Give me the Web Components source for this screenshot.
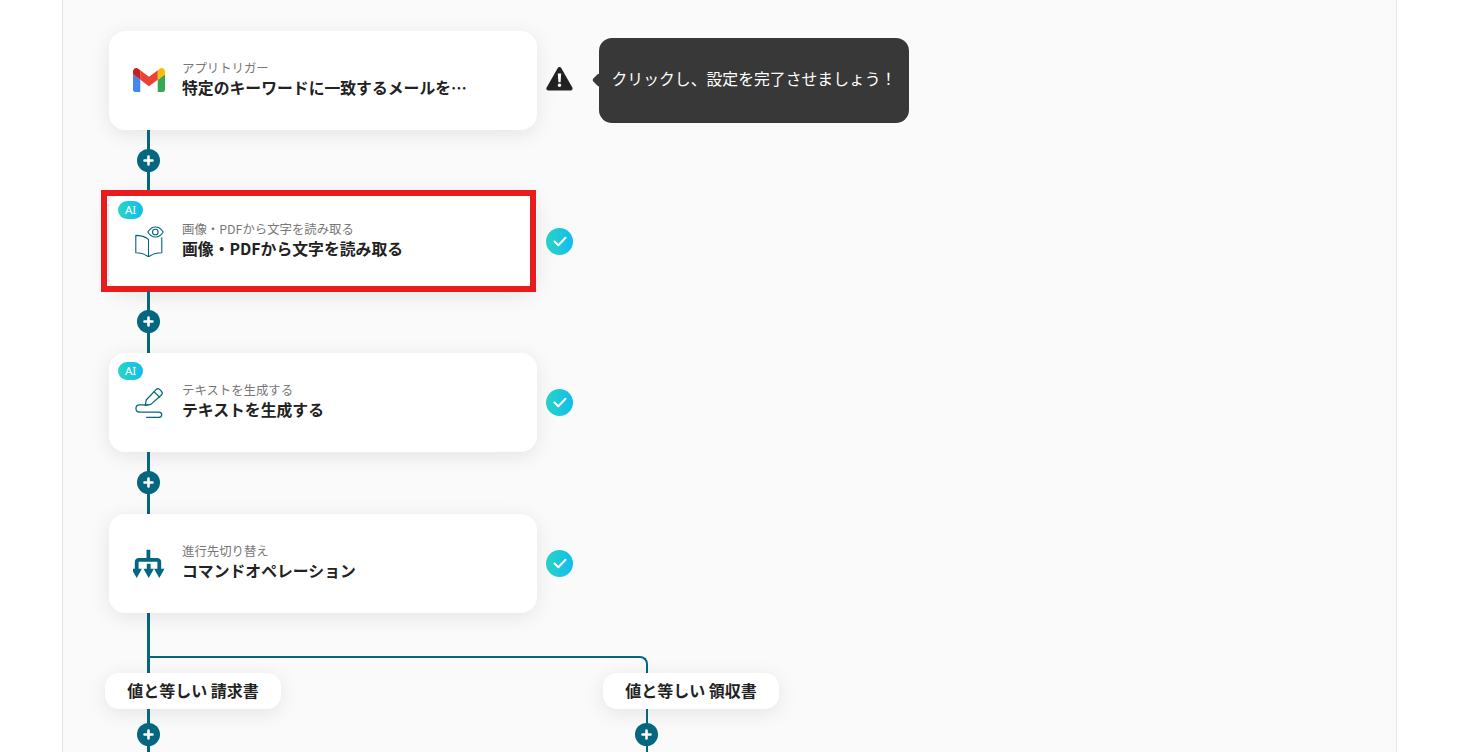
<!DOCTYPE html>
<html lang="ja">
<head>
<meta charset="utf-8">
<title>Flow</title>
<style>
  html, body { margin: 0; height: 100%; background: #fff; overflow: hidden; }
  body { font-family: "Noto Sans CJK JP", "Noto Sans", sans-serif; color: #222; }
</style>
</head>
<body>
<flow-canvas>
  <flow-step sub="アプリトリガー" heading="特定のキーワードに一致するメールを…" status="warn" tip="クリックし、設定を完了させましょう！">
    <svg slot="icon" width="32" height="24" viewBox="52 42 88 66">
      <path fill="#4285f4" d="M58 108h14V74L52 59v43c0 3.32 2.69 6 6 6"/>
      <path fill="#34a853" d="M120 108h14c3.32 0 6-2.69 6-6V59l-20 15"/>
      <path fill="#fbbc04" d="M120 48v26l20-15v-8c0-7.42-8.47-11.65-14.4-7.2"/>
      <path fill="#ea4335" d="M72 74V48l24 18 24-18v26L96 92"/>
      <path fill="#c5221f" d="M52 51v8l20 15V48l-5.6-4.2c-5.94-4.45-14.4-.22-14.4 7.2"/>
    </svg>
  </flow-step>
  <flow-connector></flow-connector>
  <flow-step sub="画像・PDFから文字を読み取る" heading="画像・PDFから文字を読み取る" status="ok" ai marked>
    <svg slot="icon" width="32" height="32" viewBox="0 0 32 32" fill="none" stroke="#05667f" stroke-width="1.1" stroke-linejoin="round" stroke-linecap="round">
      <path d="M15.5 14.4C12 11.5 8 10.4 2.8 10.4V27.75C8 27.75 12 28.8 15.5 32C19 28.8 23 27.75 28.8 27.75V12.75M15.5 14.4V32"/>
      <path d="M14.8 7C17 3.5 20 2 22.4 2S28 3.5 30.2 7C28 10.5 25 12 22.4 12S17 10.5 14.8 7Z"/>
      <circle cx="22.3" cy="7" r="2.8"/>
    </svg>
  </flow-step>
  <flow-connector></flow-connector>
  <flow-step sub="テキストを生成する" heading="テキストを生成する" status="ok" ai>
    <svg slot="icon" width="32" height="32" viewBox="0 0 32 32" fill="none" stroke="#05667f" stroke-width="1.25" stroke-linejoin="round" stroke-linecap="round">
      <path d="M12.3 19.5L13.2 14L23 3.6C24.2 2.4 25.6 2.4 26.8 3.6L28.4 5.2C29.6 6.4 29.6 7.8 28.4 9L17.8 18.4Z"/>
      <path d="M21 5.6L26.6 11.2"/>
      <path d="M15 18.9H6.7C1.7 18.9 1.7 26 6.7 26H25.7C29.7 26 29.7 31.4 25.7 31.4H13.7"/>
    </svg>
  </flow-step>
  <flow-connector></flow-connector>
  <flow-step sub="進行先切り替え" heading="コマンドオペレーション" status="ok">
    <svg slot="icon" width="32" height="32" viewBox="0 0 32 32" fill="#05667f">
      <path fill="none" stroke="#05667f" stroke-width="3.8" d="M15.4 2.75V12.8M3.7 24V15a2.2 2.2 0 0 1 2.2-2.2H24.1a2.2 2.2 0 0 1 2.2 2.2V24M15.7 16.8V24"/>
      <path d="M-1.5 21.8H8.9L3.7 31ZM10.5 21.8H20.9L15.7 31ZM21.1 21.8H31.5L26.3 31Z"/>
    </svg>
  </flow-step>
  <flow-branches>
    <branch-pill slot="left">値と等しい 請求書</branch-pill>
    <branch-pill slot="right">値と等しい 領収書</branch-pill>
  </flow-branches>
</flow-canvas>

<script>
const lineColor = "#05667f";

// flow-canvas — the bordered grey sheet everything sits on
class FlowCanvas extends HTMLElement {
  constructor() {
    super();
    this.attachShadow({ mode: "open" }).innerHTML = `
      <style>
        :host {
          display: block;
          box-sizing: border-box;
          width: 1335px;
          height: 752px;
          margin-left: 62px;
          padding: 31px 0 0 46px;
          background: #fafafa;
          border-left: 1px solid #e4e4e4;
          border-right: 1px solid #e4e4e4;
          overflow: hidden;
        }
      </style>
      <slot></slot>`;
  }
}
customElements.define("flow-canvas", FlowCanvas);

// flow-step — card + status mark. Attributes: sub, heading, status, tip, ai, marked
class FlowStep extends HTMLElement {
  constructor() {
    super();
    this.attachShadow({ mode: "open" });
  }
  connectedCallback() {
    const status = this.getAttribute("status");
    const tip = this.getAttribute("tip");
    const mark = status === "warn"
      ? `<svg class="mark warn" width="27" height="25" viewBox="0 0 27 25"><path fill="#222" stroke="#222" stroke-width="4" stroke-linejoin="round" d="M13.5 3L2.4 22.5H24.6Z"/><path fill="#fff" d="M11.8 7.5h3.4l-.6 8.8h-2.2zM13.5 17.5a1.8 1.8 0 1 1 0 3.6a1.8 1.8 0 0 1 0-3.6z"/></svg>`
      : `<span class="ok"><svg width="14" height="11" viewBox="0 0 14 11" fill="none" stroke="#fff" stroke-width="2" stroke-linecap="round" stroke-linejoin="round"><path d="M1.5 5.5L5.3 9.3L12.5 1.7"/></svg></span>`;
    this.shadowRoot.innerHTML = `
      <style>
        :host { display: flex; align-items: center; }
        .card {
          position: relative;
          box-sizing: border-box;
          flex: none;
          width: 428px;
          height: 98.5px;
          display: flex;
          align-items: center;
          gap: 17px;
          padding: 0 20px 0 24px;
          background: #fff;
          border-radius: 16px;
          box-shadow: 0 4px 20px rgba(0,0,0,.09);
        }
        .icon { flex: none; width: 32px; height: 32px; display: flex; align-items: center; justify-content: center; }
        .text { min-width: 0; margin-bottom: 1px; }
        .sub { font-size: 12.4px; line-height: 17px; color: #777; white-space: nowrap; }
        .title { font-size: 15.84px; font-weight: 700; line-height: 22px; color: #222; white-space: nowrap; }
        .ai {
          position: absolute; left: 9px; top: 9px;
          width: 25px; height: 18px; border-radius: 9px;
          background: linear-gradient(90deg, #2ad4c4, #10bdee);
          color: #fff; font: 400 11.5px/18px "Noto Sans", sans-serif; text-align: center;
        }
        .mark, .ok { flex: none; margin-left: 9px; }
        .warn { margin-bottom: 4px; }
        .ok {
          width: 27px; height: 27px; border-radius: 50%;
          display: flex; align-items: center; justify-content: center;
          background: linear-gradient(90deg, #2ad4c4, #10bdee);
        }
        .tip {
          position: relative;
          box-sizing: border-box;
          flex: none;
          width: 310px; height: 85px;
          margin-left: 26px;
          padding-bottom: 3px;
          display: flex; align-items: center; justify-content: center;
          background: #383838;
          border-radius: 13px;
          color: #fff; font-size: 15.84px; white-space: nowrap;
        }
        .tip::before {
          content: ""; position: absolute; left: -5px; top: 37px;
          width: 10px; height: 10px; background: #383838;
          transform: rotate(45deg); border-radius: 2px;
        }
        .marked {
          position: absolute; left: -8px; top: -2px;
          box-sizing: border-box; width: 435px; height: 102px;
          border: 6px solid #e81c1c; pointer-events: none;
        }
      </style>
      <div class="card">
        ${this.hasAttribute("ai") ? `<span class="ai">AI</span>` : ""}
        <div class="icon"><slot name="icon"></slot></div>
        <div class="text">
          <div class="sub">${this.getAttribute("sub")}</div>
          <div class="title">${this.getAttribute("heading")}</div>
        </div>
        ${this.hasAttribute("marked") ? `<div class="marked"></div>` : ""}
      </div>
      ${mark}
      ${tip ? `<div class="tip">${tip}</div>` : ""}`;
  }
}
customElements.define("flow-step", FlowStep);

// flow-connector — vertical line with a round plus. Attributes: weight, height
class FlowConnector extends HTMLElement {
  constructor() {
    super();
    this.attachShadow({ mode: "open" });
  }
  connectedCallback() {
    const weight = this.getAttribute("weight") || 3;
    const height = this.getAttribute("height") || 62.5;
    this.shadowRoot.innerHTML = `
      <style>
        :host { display: block; width: 23px; height: ${height}px; margin-left: 28px; }
        .line { display: flex; align-items: center; justify-content: center; height: 100%; position: relative; }
        .line::before { content: ""; position: absolute; top: 0; bottom: 0; left: ${weight == 3 ? 10 : 11}px; width: ${weight}px; background: ${lineColor}; }
        .plus { position: relative; width: 23px; height: 23px; margin-bottom: 1px; border-radius: 50%; background: ${lineColor}; display: flex; align-items: center; justify-content: center; }
      </style>
      <div class="line"><span class="plus">
        <svg width="11" height="11" viewBox="0 0 11 11" stroke="#fff" stroke-width="2.6" stroke-linecap="round"><path d="M5.5 1.5v8M1.5 5.5h8"/></svg>
      </span></div>`;
  }
}
customElements.define("flow-connector", FlowConnector);

// branch-pill — label on a branch
class BranchPill extends HTMLElement {
  constructor() {
    super();
    this.attachShadow({ mode: "open" }).innerHTML = `
      <style>
        :host {
          display: flex; align-items: center; justify-content: center;
          box-sizing: border-box; width: 176px; height: 36px; padding-bottom: 2px;
          background: #fff; border-radius: 14px;
          box-shadow: 0 4px 20px rgba(0,0,0,.09);
          font-size: 16px; font-weight: 700; color: #222; white-space: nowrap;
          position: relative;
        }
      </style>
      <slot></slot>`;
  }
}
customElements.define("branch-pill", BranchPill);

// flow-branches — trunk, elbow to the second branch, then the two branch columns
class FlowBranches extends HTMLElement {
  constructor() {
    super();
    this.attachShadow({ mode: "open" }).innerHTML = `
      <style>
        :host { display: block; }
        .rail {
          box-sizing: border-box; height: 60.5px; margin-left: 38px; padding-top: 43.5px;
          border-left: 3px solid ${lineColor};
        }
        .elbow {
          box-sizing: border-box; width: 498px; height: 17px;
          border-top: 2px solid ${lineColor}; border-right: 2px solid ${lineColor};
          border-top-right-radius: 8px;
        }
        .cols { display: flex; gap: 322px; margin-left: -4px; }
      </style>
      <div class="rail"><div class="elbow"></div></div>
      <div class="cols">
        <div><slot name="left"></slot><flow-connector height="51" style="margin-left:32px"></flow-connector></div>
        <div><slot name="right"></slot><flow-connector height="51" weight="2" style="margin-left:32px"></flow-connector></div>
      </div>`;
  }
}
customElements.define("flow-branches", FlowBranches);
</script>
</body>
</html>
